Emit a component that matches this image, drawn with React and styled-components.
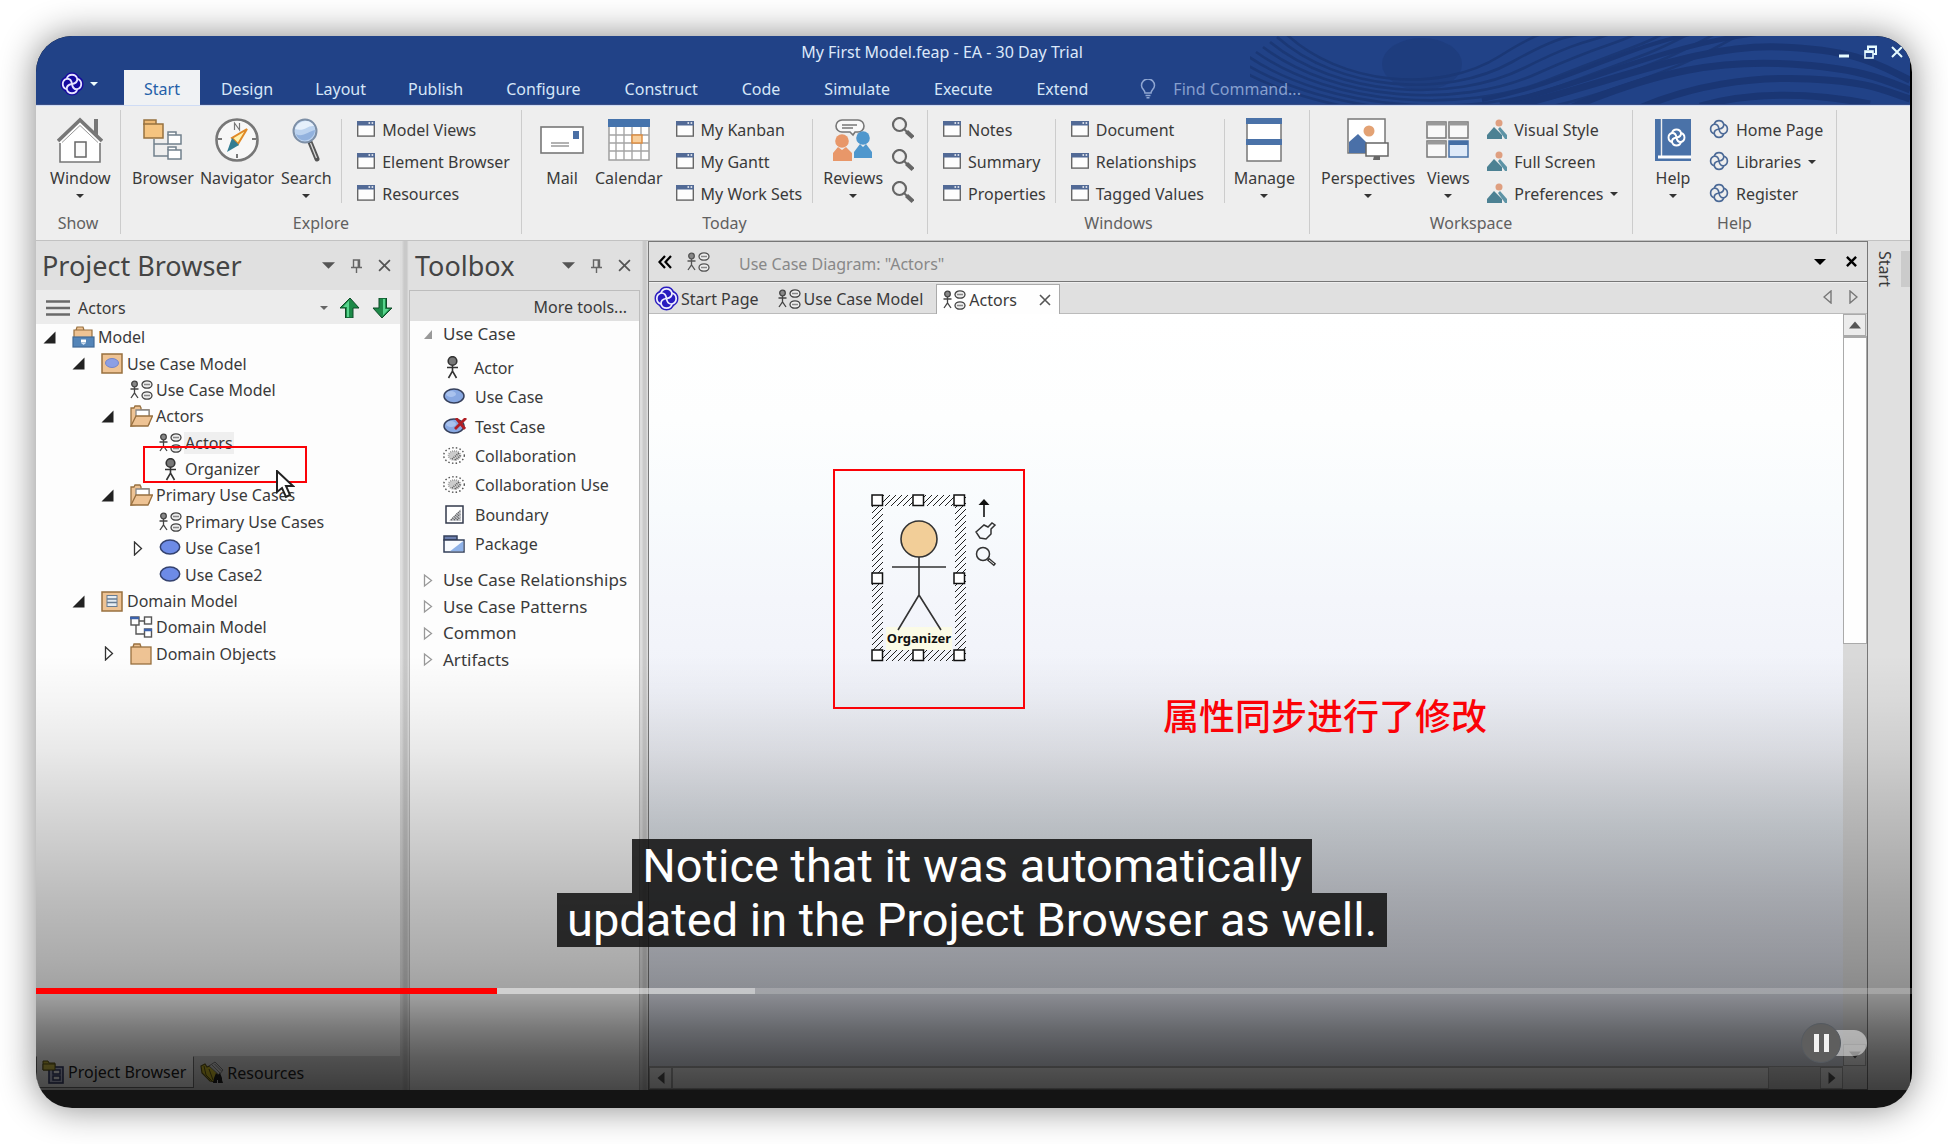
import React from "react";
import styled, { createGlobalStyle } from "styled-components";

const Global = createGlobalStyle`
  *, *::before, *::after { box-sizing: border-box; }
  body { margin: 0; background: #fff; }
  body, button, input { font-family: "Noto Sans", "Noto Sans CJK SC", sans-serif; font-size: 16px; line-height: 22px; color: #3a3a3a; }
  button { background: none; border: 0; padding: 0; white-space: nowrap; cursor: pointer; }
  ul { list-style: none; margin: 0; padding: 0; }
  svg { display: block; flex: none; }
`;

/* ---------- icons ---------- */

const Knot = ({ size = 20, color = "#4c6a97", width = 2, halo }) => {
  const loop = "M6.300 6.300A5.900 5.900 0 0 1 17.700 6.300C18 9.500 15.500 11.500 12 12";
  return (
    <svg width={size} height={size} viewBox="0 0 24 24" fill="none" overflow="visible">
      {halo && <rect x="4" y="4" width="16" height="16" fill={halo} />}
      {halo && [0, 90, 180, 270].map((a) => (
        <path key={`h${a}`} d={loop} transform={`rotate(${a} 12 12)`} stroke={halo} strokeWidth={width + 3} fill={halo} />
      ))}
      {[0, 90, 180, 270].map((a) => (
        <path key={a} d={loop} transform={`rotate(${a} 12 12)`} stroke={color} strokeWidth={width} />
      ))}
    </svg>
  );
};

const Caret = ({ size = 8, color = "#333" }) => (
  <svg width={size} height={Math.ceil(size / 2)} viewBox="0 0 8 4"><path d="M0 0h8L4 4z" fill={color} /></svg>
);

const Cross = ({ size = 12, color = "#555", width = 2 }) => (
  <svg width={size} height={size} viewBox="0 0 12 12"><path d="M1 1l10 10M11 1L1 11" stroke={color} strokeWidth={width} /></svg>
);

const Pin = () => (
  <svg width="11" height="14" viewBox="0 0 11 14" fill="none" stroke="#666" strokeWidth="1.4">
    <path d="M2.5 8V1h6v7M0 8.5h11M5.5 8.5V14" /><path d="M7.6 1v7" strokeWidth="2" />
  </svg>
);

const MiniWindow = () => (
  <svg width="18" height="16" viewBox="0 0 18 16">
    <rect x=".7" y=".7" width="16.6" height="14.4" fill="#fdfdfd" stroke="#666" strokeWidth="1.4" />
    <rect x="0" y="0" width="18" height="4.5" fill="#526a96" />
    <path d="M11.5 2h1.6M14.6 2h1.6" stroke="#fff" strokeWidth="1.6" />
  </svg>
);

const House = () => (
  <svg width="46" height="46" viewBox="0 0 46 46" fill="none">
    <path d="M37 2h4v18l-4-4z" fill="#777" />
    <path d="M3 25L23 5l20 20v20H3z" fill="#fff" />
    <path d="M3 26v19h40V26" stroke="#777" strokeWidth="1.6" />
    <path d="M1 24L23 3l22 21" stroke="#777" strokeWidth="3.6" />
    <path d="M5 25.500L23 8.500l18 17" stroke="#999" strokeWidth="1" />
    <rect x="18" y="25" width="11" height="15" stroke="#666" strokeWidth="1.5" fill="#fafafa" />
  </svg>
);

const BrowserTree = () => (
  <svg width="40" height="42" viewBox="0 0 40 42" fill="none" stroke="#71808c" strokeWidth="1.5">
    <path d="M11 20v17h14M11 25h14" />
    <path d="M1 6V1h12v4" fill="#edb873" stroke="#96713f" /><rect x="1" y="5" width="19" height="14" fill="#f5c480" stroke="#96713f" />
    <path d="M25 16v-3h8v3" fill="#fff" /><rect x="25" y="16" width="13" height="9" fill="#fff" />
    <path d="M25 31v-3h8v3" fill="#fff" /><rect x="25" y="31" width="13" height="9" fill="#fff" />
  </svg>
);

const Compass = () => (
  <svg width="44" height="46" viewBox="0 0 44 46">
    <circle cx="22" cy="23" r="20.500" fill="#f7f7f7" stroke="#777" strokeWidth="2.6" />
    <path d="M19.500 13V6l5 7V6" fill="none" stroke="#777" strokeWidth="1.200" />
    <path d="M22 37v4M3 22h4M37 22h4" stroke="#777" strokeWidth="2" />
    <path d="M32 12L17 21l6 6z" fill="#fff3b0" stroke="#e08a28" strokeWidth="2" />
    <path d="M12 35l5-14 7 7z" fill="#347d92" />
  </svg>
);

const Magnifier = () => (
  <svg width="28" height="46" viewBox="0 0 28 46">
    <path d="M18 25l7 17" stroke="#555" strokeWidth="5" strokeLinecap="round" />
    <path d="M18.500 26l6 15" stroke="#ddd" strokeWidth="1.200" />
    <circle cx="13" cy="14" r="11.500" fill="#bcd3ef" stroke="#7d8fa6" strokeWidth="2" />
    <path d="M3 12C6 3 18 1 22 9c-7-1-9 6-19 3z" fill="#e6f0fb" />
    <path d="M4 17c6 4 13-3 19-4-1 12-16 14-19 4z" fill="#92b2de" />
  </svg>
);

const Envelope = () => (
  <svg width="44" height="28" viewBox="0 0 44 28" fill="none">
    <rect x="1" y="1" width="42" height="26" fill="#fff" stroke="#777" strokeWidth="1.600" />
    <rect x="33" y="5" width="6" height="8" fill="#4a6fa5" /><path d="M11 17h18M11 20h18" stroke="#999" strokeWidth="1.400" />
  </svg>
);

const Calendar = () => (
  <svg width="42" height="42" viewBox="0 0 42 42" fill="none">
    <rect x="1" y="1" width="40" height="40" fill="#fff" stroke="#999" strokeWidth="1.400" />
    <rect width="42" height="8" fill="#4573ac" />
    <path d="M8 8v33M16 8v33M24 8v33M33 8v33M1 16h40M1 24h40M1 32h40" stroke="#a5a5a5" strokeWidth="1.400" />
    <rect x="24" y="16" width="10" height="8" fill="#f8cf9c" stroke="#dd8b3e" strokeWidth="1.400" />
  </svg>
);

const People = () => (
  <svg width="40" height="44" viewBox="0 0 40 44" fill="none">
    <path d="M9 2h16a5 5 0 0 1 0 12l-3 0-2 3-3-3H9A5 5 0 0 1 9 2z" fill="#f8f8f8" stroke="#777" strokeWidth="1.600" />
    <path d="M9 7h15M9 10h11" stroke="#777" strokeWidth="1.300" />
    <circle cx="30" cy="20" r="6.800" fill="#4f97cd" /><path d="M21 40V34l6-8 3 3 3-3 6 8v6z" fill="#4f97cd" />
    <circle cx="9" cy="23" r="6.800" fill="#e89769" /><path d="M0 43v-8l5-6 4 3 4-3 6 6v8z" fill="#e89769" />
  </svg>
);

const SearchGlyph = () => (
  <svg width="24" height="24" viewBox="0 0 24 24" fill="none" stroke="#666">
    <circle cx="9.500" cy="7.500" r="6.500" strokeWidth="2.200" /><path d="M14 12l3 3" strokeWidth="2" /><path d="M16.500 14.500l6.500 6" strokeWidth="4.400" />
  </svg>
);

const ManageStack = () => (
  <svg width="36" height="44" viewBox="0 0 36 44" fill="#fff">
    <rect x="1" y="1" width="34" height="42" stroke="#777" strokeWidth="1.500" /><path d="M0 0h36v6H0zM0 21h36v6H0z" fill="#4a72a8" />
  </svg>
);

const PerspectiveArt = () => (
  <svg width="42" height="44" viewBox="0 0 42 44" fill="none">
    <rect x="1" y="1" width="37" height="34" fill="#fff" stroke="#777" strokeWidth="1.500" />
    <circle cx="22" cy="13" r="5.500" fill="#e3a274" /><path d="M2 35V24l9-8 9 9v10z" fill="#4a70a8" />
    <rect x="19" y="25" width="22" height="13" fill="#fff" stroke="#666" strokeWidth="1.500" /><path d="M27 38h6v4h-7z" fill="#666" />
  </svg>
);

const ViewsArt = () => (
  <svg width="44" height="38" viewBox="0 0 44 38" fill="#f8f8f8" stroke="#777" strokeWidth="1.500">
    <rect x="1" y="1" width="19" height="16" /><rect x="23" y="1" width="19" height="16" />
    <rect x="1" y="20" width="19" height="16" /><rect x="23" y="20" width="19" height="16" fill="#dfeaf8" stroke="#456fa5" />
    <path d="M1 3h19M23 3h19M1 22h19" stroke="#999" strokeWidth="3" /><path d="M23 22h19" stroke="#456fa5" strokeWidth="4" />
  </svg>
);

const Mountain = () => (
  <svg width="20" height="20" viewBox="0 0 20 20">
    <circle cx="12" cy="4" r="3.500" fill="#df9f80" /><path d="M0 20v-4l7-8 8 8 0 4z" fill="#4c8193" /><path d="M11 10l2-2 7 8v4h-2z" fill="#5d93a5" />
  </svg>
);

const HelpBook = () => (
  <svg width="36" height="42" viewBox="0 0 36 42">
    <rect width="36" height="42" fill="#4a72a8" /><path d="M6.500 0v37" stroke="#eee" strokeWidth="1.400" /><path d="M3 38h33" stroke="#fff" strokeWidth="3" />
    <g transform="translate(12 9)"><Knot size={19} color="#fff" width={2.4} /></g>
  </svg>
);

const Bulb = () => (
  <svg width="16" height="20" viewBox="0 0 16 20" fill="none" stroke="#8fa6d2" strokeWidth="1.500">
    <path d="M5 14C5 11 1.500 10 1.500 6.500a6.300 6.300 0 0 1 13 0C14.500 10 11 11 11 14zM5.500 16.500h5M6.500 18.700h3" />
  </svg>
);

const DiagramIcon = ({ color = "#444" }) => (
  <svg width="23" height="20" viewBox="0 0 23 20" fill="none" stroke={color} strokeWidth="1.300">
    <circle cx="4.500" cy="4" r="2.800" fill="#888" /><path d="M4.500 7v6M.5 9h8M1 18l3.500-5L8 18" />
    <ellipse cx="17" cy="4.500" rx="5" ry="3.700" fill="#eee" /><ellipse cx="17" cy="15.500" rx="5" ry="3.700" fill="#eee" />
    <path d="M14 4.500h6M14 15.500h6" stroke="#888" />
  </svg>
);

const ActorIcon = ({ shift = 0 }) => (
  <svg width="23" height="23" viewBox={`${shift} 0 23 23`} fill="none" stroke="#333" strokeWidth="1.600">
    <circle cx="11.500" cy="5" r="4.300" fill="#777" /><path d="M11.500 9v6M6 11.500h11M7.500 22l4-7 4 7" />
  </svg>
);

const FolderOpen = () => (
  <svg width="23" height="22" viewBox="0 0 23 22" fill="#eec394" stroke="#98703f" strokeWidth="1.300">
    <path d="M1 21V3h3l1-2h5l1 2v2h8v14z" /><path d="M6 5h13v8H6z" fill="#fff" stroke="#888" /><path d="M1 21L6 11h16.500L18 21z" />
  </svg>
);

const FolderClosed = () => (
  <svg width="23" height="22" viewBox="0 0 23 22" fill="#eec394" stroke="#98703f" strokeWidth="1.300">
    <path d="M3 4l1-3h6l1 3" /><rect x="1" y="4" width="20" height="17" />
  </svg>
);

const ModelRoot = () => (
  <svg width="23" height="22" viewBox="0 0 23 22" fill="#eec394" stroke="#98703f" strokeWidth="1.200">
    <path d="M4 4l1-3h6l1 3M2 11V4h18v7" /><rect x="1" y="11" width="21" height="10" fill="#5485b8" stroke="#416a96" /><path d="M9 13.500h5v3H9z" fill="#fff" stroke="none" /><path d="M9 17h5l-2.500 2z" fill="#cfe0f0" stroke="none" />
  </svg>
);

const PackageIcon = ({ kind }) => (
  <svg width="23" height="21" viewBox="0 0 23 21">
    <rect x="1" y="1" width="20" height="19" fill="#eec394" stroke="#98703f" strokeWidth="1.500" />
    {kind === "use" ? <ellipse cx="11" cy="10" rx="6.500" ry="4.500" fill="#8c9fe4" stroke="#7585c8" /> : (
      <g fill="#e5ecf2" stroke="#687c92"><rect x="6" y="4.500" width="10" height="11" /><path d="M6 8h10M6 11.500h10" strokeWidth="1.500" /></g>
    )}
  </svg>
);

const UseCaseIcon = () => (
  <svg width="23" height="18" viewBox="0 0 23 18"><ellipse cx="11" cy="8" rx="9.700" ry="7" fill="#6d8be6" stroke="#34426f" strokeWidth="1.500" /></svg>
);

const ClassDiagram = () => (
  <svg width="23" height="22" viewBox="0 0 23 22" fill="#fff" stroke="#555" strokeWidth="1.400">
    <path d="M9 5h5M6 9v9h8" fill="none" /><rect x="1" y="1" width="8" height="8" /><rect x="14.500" y="1" width="7" height="7" /><rect x="14.500" y="13" width="7" height="8" />
    <path d="M0 2h9M14 14h8" stroke="#3c62ab" strokeWidth="2.600" />
  </svg>
);

const ToolUseCase = ({ crossed }) => (
  <svg width="24" height="18" viewBox="0 0 24 18">
    <ellipse cx="11" cy="8" rx="10" ry="7" fill="#88a8e2" stroke="#36405c" strokeWidth="1.500" /><ellipse cx="8" cy="6" rx="5" ry="3" fill="#a9c2ee" />
    {crossed && <path d="M13 0l9 11M23 0L12 11" stroke="#b01e24" strokeWidth="2.800" />}
  </svg>
);

const ToolCollab = () => (
  <svg width="24" height="18" viewBox="0 0 24 18">
    <ellipse cx="11" cy="8.500" rx="10.300" ry="7.800" fill="none" stroke="#555" strokeWidth="1.400" strokeDasharray="1.500 2.200" />
    <ellipse cx="11.500" cy="8.500" rx="6" ry="4.600" fill="#ccc" stroke="#999" strokeWidth="1.500" strokeDasharray="1 1" /><path d="M9 12l7-6M12 13l6-5" stroke="#555" strokeWidth="1.600" strokeDasharray="1 1" />
  </svg>
);

const ToolBoundary = () => (
  <svg width="24" height="19" viewBox="0 0 24 19">
    <rect x="3" y="1" width="17" height="17" fill="#fff" stroke="#333a4c" strokeWidth="1.500" /><path d="M6 16L18 4v12z" fill="#c5c7cc" /><path d="M8 15l9-9M11 15l6-6M14 15l3-3" stroke="#555" strokeWidth="1.600" strokeDasharray="1 1" />
  </svg>
);

const ToolPackage = () => (
  <svg width="24" height="18" viewBox="0 0 24 18" stroke="#333f5a" strokeWidth="1.500">
    <rect x="1" y="1" width="13" height="4" fill="#6c7fae" /><rect x="1" y="5" width="20" height="12" fill="#f8fbff" /><path d="M7 16.300L20.300 6v10.300z" fill="#8fb2e8" stroke="none" />
  </svg>
);

const GreenArrow = ({ down }) => (
  <svg width="20" height="20" viewBox="0 0 20 20">
    <g transform={down ? "rotate(180 10 10)" : undefined}>
      <path d="M10 0L0 10h5.500v10H13V10h6z" fill="#1d8a48" stroke="#0e4c28" strokeWidth="1" /><path d="M9.500 2L3 9h4v10h2V3z" fill="#58d58e" />
    </g>
  </svg>
);

const Burger = () => (
  <svg width="24" height="16" viewBox="0 0 24 16"><path d="M0 1.500h24M0 8h24M0 14.500h24" stroke="#6a6a6a" strokeWidth="2.600" /></svg>
);

const Expander = ({ open, muted }) => {
  const line = muted ? "#999" : "#333";
  return (
    <svg width="13" height="15" viewBox="0 0 13 15">
      {open
        ? <path d={muted ? "M10 3v9H2z" : "M12.500 1.500v12H.5z"} fill={muted ? "#999" : "#222"} />
        : <path d={muted ? "M2.500 2v11l7-5.500z" : "M4.500 1v13l7-6.500z"} fill="#fff" stroke={line} strokeWidth="1.300" />}
    </svg>
  );
};

const ScrollArrow = ({ turn = 0 }) => (
  <svg width="12" height="12" viewBox="0 0 12 12"><path d="M0 9.500h12L6 2.500z" fill="#555" transform={`rotate(${turn} 6 6)`} /></svg>
);

const TabArrow = ({ flip }) => (
  <svg width="9" height="14" viewBox="0 0 9 14"><path d="M8 1v12L1 7z" fill="none" stroke="#777" strokeWidth="1.400" transform={flip ? "rotate(180 4.500 7)" : undefined} /></svg>
);

const BrowserTabIcon = () => (
  <svg width="23" height="24" viewBox="0 0 23 24" fill="none" stroke="#333">
    <path d="M1 2V1h5l1 2h6v7H1z" fill="#c8b83c" stroke="#5e5618" /><rect x="7" y="7" width="14" height="16" fill="#bfc3e0" stroke="#39406c" strokeWidth="1.600" />
    <path d="M11 10h7v4h-7zM11 16h7v4h-7z" fill="#fff" stroke="#39406c" strokeWidth="1.500" /><path d="M1 4h12v6H1z" fill="#d2c24a" stroke="#5e5618" />
  </svg>
);

const ResourceTabIcon = () => (
  <svg width="24" height="24" viewBox="0 0 24 24">
    <path d="M1 5l4-2 2 3 5-2 6 8-2 9-6-1-8-8z" fill="#d2c02c" stroke="#5e5618" strokeWidth="1.200" /><path d="M4 5l2 9 6 6M9 8l4 11" fill="none" stroke="#5e5618" />
    <path d="M9 5l6-4 8 8-4 5z" fill="#d8d8d8" stroke="#666" strokeWidth=".8" /><path d="M12 4l8 8M14.500 3l7 7" stroke="#888" />
    <path d="M14 17l2-5 2 2 2-2 2 5v2l1 3h-5v-3h-1v3h-4z" fill="#222" />
  </svg>
);

const HeaderWaves = styled.svg`
  position: absolute;
  top: 0;
  right: 0;
  width: 660px;
  height: 68px;
`;

const Waves = () => (
  <HeaderWaves viewBox="0 0 660 68" fill="none" aria-hidden="true">
    <ellipse cx="172" cy="28" rx="40" ry="26" fill="#1b3876" opacity=".5" />
    <g stroke="#1b3876" strokeWidth="2.600">
      {[0, 1, 2, 3, 4, 5, 6, 7].map((i) => (
        <path key={i} d={`M${34 - i * 7} ${-4 + i * 5}C${90 - i * 2} ${50 + i * 5} ${190 + i * 6} ${58 + i * 5} ${250 + i * 12} ${20 + i * 6}S${300 + i * 22} ${4 + i * 2} ${320 + i * 26} -8`} />
      ))}
    </g>
    <g stroke="#1a3674" strokeWidth="7">
      <path d="M232 64C330 44 370 10 460 -6" strokeWidth="4" />
      <path d="M250 68C350 44 420 6 520 -4" strokeWidth="5" />
      <path d="M250 74C370 44 450 8 530 11S630 30 660 44" />
      <path d="M320 72C410 34 470 24 540 28S635 44 660 54" />
      <path d="M390 72C440 50 500 40 560 43s70 10 100 20" />
      <path d="M450 70c50-14 110-14 170-2" />
    </g>
  </HeaderWaves>
);

/* ---------- player frame ---------- */

const Page = styled.main`
  min-height: 100vh;
  padding: 36px;
`;

const Player = styled.section`
  position: relative;
  display: flex;
  flex-direction: column;
  height: calc(100vh - 72px);
  padding: 0 2px 18px 0;
  overflow: hidden;
  border-radius: 36px;
  background: linear-gradient(to top, #141414 18px, #000 18px);
`;

const Shadow = styled.div`
  border-radius: 36px;
  box-shadow: 0 0 36px rgba(0, 0, 0, 0.48);
`;

const Shade = styled.div`
  position: absolute;
  left: 0;
  right: 0;
  bottom: 18px;
  height: 450px;
  pointer-events: none;
  background: linear-gradient(
    to bottom,
    rgba(0, 0, 0, 0) 15px, rgba(0, 0, 0, 0.03) 60px, rgba(0, 0, 0, 0.08) 110px,
    rgba(0, 0, 0, 0.14) 160px, rgba(0, 0, 0, 0.2) 210px, rgba(0, 0, 0, 0.26) 260px,
    rgba(0, 0, 0, 0.32) 320px, rgba(0, 0, 0, 0.37) 355px, rgba(0, 0, 0, 0.53) 390px,
    rgba(0, 0, 0, 0.63) 417px, rgba(0, 0, 0, 0.72) 450px
  );
`;

const Captions = styled.div`
  position: absolute;
  left: 0;
  right: 4px;
  bottom: 161px;
  display: flex;
  flex-direction: column;
  align-items: center;
  font: 47px/54px Roboto, sans-serif;
  color: #fff;
  span { padding: 0 10px; background: rgba(16, 16, 16, 0.86); white-space: nowrap; }
`;

const Track = styled.div`
  position: absolute;
  left: 0;
  right: 0;
  bottom: 114px;
  height: 6px;
  background: rgba(255, 255, 255, 0.2);
`;

const Fill = styled.div`
  position: absolute;
  inset: 0 auto 0 0;
  background: ${(p) => p.$color};
`;

const Autoplay = styled.button`
  position: absolute;
  right: 45px;
  bottom: 45px;
  display: flex;
  align-items: center;
  height: 40px;
  width: 66px;
  &::before {
    content: "";
    position: absolute;
    inset: 7px 0 7px 20px;
    border-radius: 13px;
    background: rgba(255, 255, 255, 0.5);
  }
`;

const Knob = styled.span`
  position: relative;
  display: flex;
  align-items: center;
  justify-content: center;
  gap: 5px;
  width: 40px;
  height: 40px;
  border-radius: 50%;
  background: #5e5e5e;
  border: 1px solid #555a60;
  &::before, &::after { content: ""; width: 5px; height: 18px; background: #f2f2f2; }
`;

/* ---------- title bar and menu ---------- */

const Header = styled.header`
  position: relative;
  flex: none;
  background: #214287;
  border-bottom: 1px solid #3a4f86;
`;

const TitleRow = styled.div`
  position: relative;
  display: flex;
  align-items: center;
  height: 34px;
  padding: 0 0 2px 16px;
`;

const AppTitle = styled.h1`
  flex: 1;
  margin: 0;
  font-size: 16px;
  font-weight: 400;
  line-height: 22px;
  text-align: center;
  color: #dce8fa;
`;

const WindowControls = styled.div`
  display: flex;
  align-items: center;
  justify-content: space-between;
  width: 78px;
  padding: 0 7px;
`;

const MenuRow = styled.nav`
  position: relative;
  display: flex;
  height: 34px;
`;

const AppMenu = styled.button`
  display: flex;
  align-items: center;
  gap: 7px;
  width: 88px;
  padding: 0 0 6px 25px;
`;

const MenuTab = styled.button`
  height: 35px;
  padding: 3px ${(p) => (p.$active ? 20 : p.$wide ? 22 : 21)}px 0;
  color: ${(p) => (p.$active ? "#2460a8" : "#d6e6f8")};
  background: ${(p) => (p.$active ? "#f0f2f4" : "none")};
`;

const FindBox = styled.label`
  display: flex;
  align-items: center;
  gap: 17px;
  padding: 3px 0 0 30px;
  input {
    width: 140px; padding: 0; border: 0; background: none; outline: 0; color: #d6e6f8;
    &::placeholder { color: #869fce; opacity: 1; }
  }
`;

/* ---------- ribbon ---------- */

const Ribbon = styled.div`
  flex: none;
  display: grid;
  grid-template-columns: 85px 401px 406px 382px 323px 204px 1fr;
  height: 136px;
  padding: 4px 0 6px;
  background: #eee;
  border-top: 1px solid #cfdcf5;
  border-bottom: 1px solid #c2c2c2;
`;

const Group = styled.section`
  display: flex;
  flex-direction: column;
  justify-content: space-between;
  border-right: 1px solid #ccc;
  h2 { margin: 0; font-size: 16px; font-weight: 400; line-height: 22px; text-align: center; color: #606060; }
`;

const GroupRow = styled.div`
  display: flex;
  gap: ${(p) => p.$gap ?? 6}px;
  height: 100px;
  padding: 4px 0 0 ${(p) => p.$pad}px;
`;

const Large = styled.button`
  display: flex;
  flex-direction: column;
  align-items: center;
  min-width: 52px;
  height: 90px;
`;

const LargeArt = styled.span`
  display: flex;
  align-items: center;
  height: 53px;
  padding-bottom: 2px;
`;

const LargeLabel = styled.span`
  margin-bottom: 5px;
`;

const SmallList = styled.ul`
  min-width: ${(p) => p.$min ?? 0}px;
  padding-left: ${(p) => (p.$tight ? 0 : 6)}px;
`;

const Small = styled.button`
  display: flex;
  align-items: center;
  gap: 7px;
  height: 32px;
  svg:first-child { margin-bottom: 2px; }
`;

const Rule = styled.span`
  width: 1px;
  height: 84px;
  margin: 5px 3px 0;
  background: #ccc;
`;

const Big = ({ art, label, menu }) => (
  <Large><LargeArt>{art}</LargeArt><LargeLabel>{label}</LargeLabel>{menu && <Caret />}</Large>
);

const Smalls = ({ items, icon, min, menus = [] }) => (
  <SmallList $min={min}>
    {items.map((t) => (
      <li key={t}><Small>{icon}<span>{t}</span>{menus.includes(t) && <Caret />}</Small></li>
    ))}
  </SmallList>
);

/* ---------- work area ---------- */

const Work = styled.div`
  flex: 1;
  min-height: 0;
  display: grid;
  grid-template-columns: 364px 9px 231px 8px minmax(0, 1fr) 42px;
  background: #e0e0e0;
`;

const Splitter = styled.div`
  background: linear-gradient(to right, #ddd 20%, #c9c9c9 45%, #c9c9c9 75%, #e4e4e4);
`;

const Panel = styled.section`
  display: flex;
  flex-direction: column;
  min-width: 0;
  min-height: 0;
`;

const PanelHead = styled.header`
  display: flex;
  align-items: center;
  flex: none;
  height: 49px;
  padding: 0 2px 0 6px;
  h2 { flex: 1; margin: 0; font-size: 27px; font-weight: 400; line-height: 36px; color: #444; }
  button { display: flex; justify-content: center; width: 28px; }
`;

const BrowserBar = styled.div`
  display: flex;
  align-items: center;
  flex: none;
  gap: 12px;
  height: 34px;
  padding: 1px 8px 0 10px;
  background: #ececec;
  b { flex: 1; font-weight: 400; margin-left: -4px; }
`;

const TreeArea = styled.div`
  position: relative;
  flex: 1;
  min-height: 0;
  background: #fdfdfd;
`;

const Tree = styled.ul`
  display: grid;
  grid-auto-rows: 1fr;
  height: 343px;
`;

const TreeRow = styled.li`
  display: flex;
  align-items: center;
  padding-left: ${(p) => 7 + p.$level * 29}px;
`;

const Toggle = styled.span`
  width: 29px;
`;

const TreeLabel = styled.span`
  margin-left: 2px;
  padding: 0 1px;
  background: ${(p) => (p.$marked ? "#efefef" : "none")};
`;

const MarkBox = styled.div`
  position: absolute;
  z-index: 1;
  left: ${(p) => p.$x}px;
  top: ${(p) => p.$y}px;
  width: ${(p) => p.$w}px;
  height: ${(p) => p.$h}px;
  border: 2px solid #fb0207;
`;

const Pointer = styled.svg`
  position: absolute;
  z-index: 2;
  left: 240px;
  top: 146px;
`;

const BottomTabs = styled.div`
  display: flex;
  flex: none;
  height: 34px;
  background: #dadada;
`;

const BottomTab = styled.button`
  display: flex;
  align-items: center;
  gap: 3px;
  height: ${(p) => (p.$active ? 32 : 34)}px;
  padding: 0 7px 0 5px;
  color: #222;
  background: ${(p) => (p.$active ? "#fdfdfd" : "none")};
  border: 1px solid ${(p) => (p.$active ? "#777" : "transparent")};
  border-top-color: transparent;
`;

const ToolBody = styled.div`
  flex: 1;
  min-height: 0;
  overflow: hidden;
  background: #fdfdfd;
  border: 1px solid #bdbdbd;
  border-bottom: 0;
`;

const MoreTools = styled.button`
  display: block;
  width: 100%;
  height: 30px;
  padding: 2px 12px 0 0;
  text-align: right;
  background: #e0e0e0;
`;

const Category = styled.button`
  display: flex;
  align-items: center;
  gap: 8px;
  height: 26px;
  padding-left: 12px;
  font-size: 17px;
`;

const CategoryList = styled.div`
  display: grid;
  grid-auto-rows: 1fr;
  height: 106px;
  margin-top: 8px;
`;

const ToolList = styled.ul`
  display: grid;
  grid-auto-rows: 1fr;
  height: 206px;
  margin: 6px 0 0;
`;

const Tool = styled.li`
  display: flex;
  align-items: center;
  gap: 8px;
  padding-left: 33px;
`;

const Editor = styled.section`
  display: flex;
  flex-direction: column;
  min-width: 0;
  min-height: 0;
  border: 1px solid #777;
`;

const EditorHead = styled.header`
  display: flex;
  align-items: center;
  flex: none;
  height: 40px;
  padding: 0 10px 0 9px;
  border-bottom: 1px solid #777;
  gap: 15px;
  p { flex: 1; margin: 0 0 0 14px; padding-top: 4px; color: #888; }
  button + button { margin-left: 5px; }
`;

const DocTabs = styled.div`
  display: flex;
  align-items: flex-end;
  flex: none;
  height: 32px;
  padding-right: 9px;
  border-bottom: 1px solid #bbb;
  box-shadow: inset 0 1px #efefef;
`;

const DocTab = styled.button`
  display: flex;
  align-items: center;
  gap: 3px;
  height: 30px;
  margin-bottom: -1px;
  padding: ${(p) => (p.$active ? "0 8px 0 6px" : "0 12px 2px 0")};
  margin-left: ${(p) => (p.$active ? 0 : 5)}px;
  background: ${(p) => (p.$active ? "#fefefe" : "none")};
  border: 1px solid ${(p) => (p.$active ? "#aaa" : "transparent")};
  border-bottom: 0;
  svg + span + svg { margin-left: 19px; }
`;

const TabScroll = styled.div`
  display: flex;
  align-items: center;
  gap: 17px;
  height: 32px;
  margin-left: auto;
`;

const CanvasGrid = styled.div`
  flex: 1;
  min-height: 0;
  display: grid;
  grid-template: minmax(0, 1fr) 23px / minmax(0, 1fr) 24px;
`;

const Canvas = styled.div`
  position: relative;
  overflow: hidden;
  background: linear-gradient(#fff 0, #fdfefe 14%, #f8fbfd 26%, #f4f6fb 38%, #f0f2f9 50%, #e9ebf1 60%, #e1e6ec 68%, #dcdfe8 82%, #d6dae4);
`;

const Shape = styled.svg`
  position: absolute;
  left: 220px;
  top: 178px;
`;

const Note = styled.p`
  position: absolute;
  z-index: 1;
  left: 514px;
  top: 373px;
  margin: 0;
  font: 500 36px/54px "Noto Sans CJK SC", sans-serif;
  white-space: nowrap;
  color: #fb0207;
`;

const VBar = styled.div`
  display: flex;
  flex-direction: column;
  background: #d9d9d9;
`;

const HBar = styled.div`
  display: flex;
  background: #cfcfcf;
  border-top: 1px solid #aaa;
`;

const BarButton = styled.button`
  display: flex;
  flex: none;
  align-items: center;
  justify-content: center;
  width: 23px;
  height: 22px;
  background: #ececec;
  border: 1px solid #aaa;
`;

const VThumb = styled.div`
  height: 41%;
  margin-bottom: auto;
  background: #fefefe;
  border: 1px solid #aaa;
  border-top-width: 2px;
`;

const HThumb = styled.div`
  flex: 0 1 1097px;
  margin-right: auto;
  background: #ececec;
  border: 1px solid #aaa;
`;

const Side = styled.aside`
  display: flex;
  justify-content: space-between;
  padding-top: 10px;
  span { padding: 0 0 0 6px; writing-mode: vertical-rl; }
  i { width: 9px; height: 36px; background: #cbcbcb; }
`;

/* ---------- data ---------- */

const MENU = ["Start", "Design", "Layout", "Publish", "Configure", "Construct", "Code", "Simulate", "Execute", "Extend"];

const TREE = [
  [0, "Model", <ModelRoot />, "open"],
  [1, "Use Case Model", <PackageIcon kind="use" />, "open"],
  [2, "Use Case Model", <DiagramIcon />],
  [2, "Actors", <FolderOpen />, "open"],
  [3, "Actors", <DiagramIcon />, null, true],
  [3, "Organizer", <ActorIcon />],
  [2, "Primary Use Cases", <FolderOpen />, "open"],
  [3, "Primary Use Cases", <DiagramIcon />],
  [3, "Use Case1", <UseCaseIcon />, "closed"],
  [3, "Use Case2", <UseCaseIcon />],
  [1, "Domain Model", <PackageIcon kind="domain" />, "open"],
  [2, "Domain Model", <ClassDiagram />],
  [2, "Domain Objects", <FolderClosed />, "closed"],
];

const TOOLS = [
  ["Actor", <ActorIcon shift={2} />],
  ["Use Case", <ToolUseCase />],
  ["Test Case", <ToolUseCase crossed />],
  ["Collaboration", <ToolCollab />],
  ["Collaboration Use", <ToolCollab />],
  ["Boundary", <ToolBoundary />],
  ["Package", <ToolPackage />],
];

const CATEGORIES = ["Use Case Relationships", "Use Case Patterns", "Common", "Artifacts"];

const HeadButtons = () => (
  <>
    <button aria-label="Panel menu"><Caret size={13} color="#555" /></button>
    <button aria-label="Pin"><Pin /></button>
    <button aria-label="Close panel"><Cross size={13} width={1.6} /></button>
  </>
);

const ActorShape = () => (
  <Shape width="130" height="172" viewBox="0 0 130 172" fill="none">
    <defs>
      <pattern id="hatch" width="6" height="6" patternUnits="userSpaceOnUse">
        <path d="M-1 7L7 -1M-1 1L1 -1M5 7L7 5" stroke="#222" strokeWidth="1" />
      </pattern>
    </defs>
    <path d="M3 3h94v166H3zM14 14v144h72V14z" fill="url(#hatch)" fillRule="evenodd" />
    <rect x="17" y="135" width="66" height="23" fill="#fbfbe6" />
    <g stroke="#333" strokeWidth="1.600">
      <path d="M50 65v38M23 75h54M50 103L29 138M50 103l22 35" />
      <circle cx="50" cy="47" r="18" fill="#f2ce98" />
    </g>
    <text x="50" y="151" textAnchor="middle" fontFamily="Noto Sans, sans-serif" fontSize="13" fontWeight="700" fill="#111">Organizer</text>
    <g fill="#fff" stroke="#111" strokeWidth="1.500">
      {[3, 44, 85].flatMap((x) => [3, 81, 158].filter((y) => !(x === 44 && y === 81)).map((y) => (
        <rect key={`${x}-${y}`} x={x} y={y} width="10.500" height="10.500" />
      )))}
    </g>
    <path d="M115 7l-5.500 6h11z" fill="#111" /><path d="M115 11v14" stroke="#111" strokeWidth="1.600" />
    <path d="M107 40l8-7 4 2 4-4 3 2-4 4 0 5-5 5-6-1-4-6z" stroke="#333" strokeWidth="1.500" />
    <circle cx="114" cy="62" r="6.500" stroke="#333" strokeWidth="1.500" /><path d="M119 67l7 6" stroke="#333" strokeWidth="3.400" /><path d="M120 68l5 4" stroke="#eee" strokeWidth="1" />
  </Shape>
);

export default function App() {
  return (
    <Page>
      <Global />
      <Shadow>
        <Player aria-label="Video player">
          <Header>
            <Waves />
            <TitleRow>
              <AppTitle>My First Model.feap - EA - 30 Day Trial</AppTitle>
              <WindowControls>
                <button aria-label="Minimize"><svg width="10" height="14" viewBox="0 0 10 14"><path d="M0 11h10" stroke="#e6fbff" strokeWidth="3" /></svg></button>
                <button aria-label="Restore"><svg width="13" height="14" viewBox="0 0 13 14" fill="none" stroke="#e6fbff" strokeWidth="1.600"><rect x="1" y="6" width="8" height="7" /><path d="M4 5V1.500h8V9H9.500M4 2h8M1 7h8" strokeWidth="2" /></svg></button>
                <button aria-label="Close"><Cross color="#e6fbff" /></button>
              </WindowControls>
            </TitleRow>
            <MenuRow>
              <AppMenu aria-label="Application menu"><Knot size={22} color="#e4e2ff" width={2} halo="#1508a0" /><Caret color="#f0ffff" /></AppMenu>
              {MENU.map((t, i) => <MenuTab key={t} $active={i === 0} $wide={i > 3}>{t}</MenuTab>)}
              <FindBox><Bulb /><input aria-label="Find Command" placeholder="Find Command..." /></FindBox>
            </MenuRow>
          </Header>

          <Ribbon>
            <Group>
              <GroupRow $pad={14}><Big art={<House />} label="Window" menu /></GroupRow>
              <h2>Show</h2>
            </Group>
            <Group>
              <GroupRow $pad={11}>
                <Big art={<BrowserTree />} label="Browser" />
                <Big art={<Compass />} label="Navigator" />
                <Big art={<Magnifier />} label="Search" menu />
                <Rule />
                <Smalls icon={<MiniWindow />} items={["Model Views", "Element Browser", "Resources"]} />
              </GroupRow>
              <h2>Explore</h2>
            </Group>
            <Group>
              <GroupRow $pad={14} $gap={7}>
                <Big art={<Envelope />} label="Mail" />
                <Big art={<Calendar />} label="Calendar" />
                <Smalls icon={<MiniWindow />} items={["My Kanban", "My Gantt", "My Work Sets"]} />
                <Rule />
                <Big art={<People />} label="Reviews" menu />
                <SmallList $tight>
                  {["Find review", "Find discussion", "Find mention"].map((t) => <li key={t}><Small aria-label={t}><SearchGlyph /></Small></li>)}
                </SmallList>
              </GroupRow>
              <h2>Today</h2>
            </Group>
            <Group>
              <GroupRow $pad={9}>
                <Smalls icon={<MiniWindow />} items={["Notes", "Summary", "Properties"]} />
                <Rule />
                <Smalls icon={<MiniWindow />} items={["Document", "Relationships", "Tagged Values"]} min={150} />
                <Rule />
                <Big art={<ManageStack />} label="Manage" menu />
              </GroupRow>
              <h2>Windows</h2>
            </Group>
            <Group>
              <GroupRow $pad={11} $gap={7}>
                <Big art={<PerspectiveArt />} label="Perspectives" menu />
                <Big art={<ViewsArt />} label="Views" menu />
                <Smalls icon={<Mountain />} items={["Visual Style", "Full Screen", "Preferences"]} menus={["Preferences"]} />
              </GroupRow>
              <h2>Workspace</h2>
            </Group>
            <Group>
              <GroupRow $pad={14} $gap={4}>
                <Big art={<HelpBook />} label="Help" menu />
                <Smalls icon={<Knot />} items={["Home Page", "Libraries", "Register"]} menus={["Libraries"]} />
              </GroupRow>
              <h2>Help</h2>
            </Group>
          </Ribbon>

          <Work>
            <Panel>
              <PanelHead><h2>Project Browser</h2><HeadButtons /></PanelHead>
              <BrowserBar>
                <Burger /><b>Actors</b><Caret color="#666" /><GreenArrow /><GreenArrow down />
              </BrowserBar>
              <TreeArea>
                <Tree>
                  {TREE.map(([level, name, icon, state, marked], i) => (
                    <TreeRow key={i} $level={level}>
                      <Toggle>{state && <Expander open={state === "open"} />}</Toggle>
                      {icon}
                      <TreeLabel $marked={marked}>{name}</TreeLabel>
                    </TreeRow>
                  ))}
                </Tree>
                <MarkBox $x={107} $y={122} $w={164} $h={37} />
                <Pointer width="19" height="29" viewBox="0 0 19 29"><path d="M1 1v21l5-4 4 9 4-2-4-9h7z" fill="#fff" stroke="#222" strokeWidth="2" /></Pointer>
              </TreeArea>
              <BottomTabs>
                <BottomTab $active><BrowserTabIcon />Project Browser</BottomTab>
                <BottomTab><ResourceTabIcon />Resources</BottomTab>
              </BottomTabs>
            </Panel>
            <Splitter />
            <Panel>
              <PanelHead><h2>Toolbox</h2><HeadButtons /></PanelHead>
              <ToolBody>
                <MoreTools>More tools...</MoreTools>
                <Category><Expander open muted />Use Case</Category>
                <ToolList>{TOOLS.map(([name, icon]) => <Tool key={name}>{icon}{name}</Tool>)}</ToolList>
                <CategoryList>
                  {CATEGORIES.map((c) => <Category key={c}><Expander muted />{c}</Category>)}
                </CategoryList>
              </ToolBody>
            </Panel>
            <Splitter />
            <Editor>
              <EditorHead>
                <button aria-label="Collapse"><svg width="14" height="14" viewBox="0 0 14 14" fill="none" stroke="#000" strokeWidth="2.200"><path d="M7 1L1.500 7 7 13M13 1L7.500 7 13 13" /></svg></button>
                <DiagramIcon color="#555" />
                <p>Use Case Diagram: "Actors"</p>
                <button aria-label="List diagrams"><Caret size={12} color="#000" /></button>
                <button aria-label="Close diagram"><Cross size={11} color="#000" width={2.6} /></button>
              </EditorHead>
              <DocTabs>
                <DocTab><Knot size={23} color="#f0f0ff" width={1.8} halo="#2a1cc0" /><span>Start Page</span></DocTab>
                <DocTab><DiagramIcon /><span>Use Case Model</span></DocTab>
                <DocTab $active><DiagramIcon /><span>Actors</span><Cross width={1.6} /></DocTab>
                <TabScroll><TabArrow /><TabArrow flip /></TabScroll>
              </DocTabs>
              <CanvasGrid>
                <Canvas>
                  <ActorShape />
                  <MarkBox $x={184} $y={155} $w={192} $h={240} />
                  <Note lang="zh">属性同步进行了修改</Note>
                </Canvas>
                <VBar>
                  <BarButton aria-label="Scroll up"><ScrollArrow /></BarButton>
                  <VThumb />
                  <BarButton aria-label="Scroll down"><ScrollArrow turn={180} /></BarButton>
                </VBar>
                <HBar>
                  <BarButton aria-label="Scroll left"><ScrollArrow turn={-90} /></BarButton>
                  <HThumb />
                  <BarButton aria-label="Scroll right"><ScrollArrow turn={90} /></BarButton>
                </HBar>
              </CanvasGrid>
            </Editor>
            <Side><span>Start</span><i /></Side>
          </Work>

          <Shade />
          <Captions>
            <span>Notice that it was automatically</span>
            <span>updated in the Project Browser as well.</span>
          </Captions>
          <Track role="progressbar" aria-label="Playback position" aria-valuenow={25}>
            <Fill $color="rgba(255, 255, 255, 0.38)" style={{ width: "38.3%" }} />
            <Fill $color="#f00" style={{ width: "24.6%" }} />
          </Track>
          <Autoplay aria-label="Autoplay"><Knob /></Autoplay>
        </Player>
      </Shadow>
    </Page>
  );
}
